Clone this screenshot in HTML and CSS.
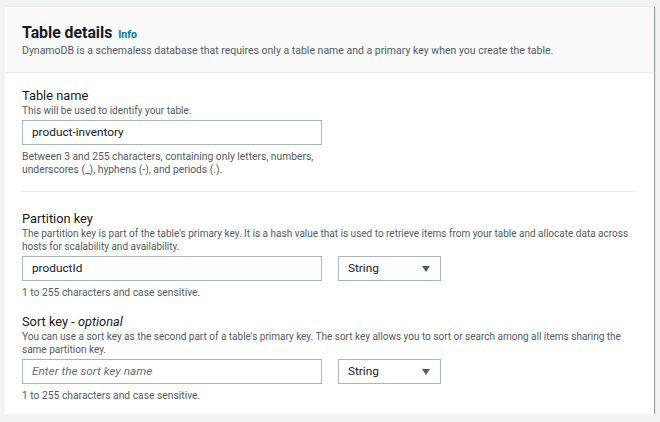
FILE: index.html
```html
<!DOCTYPE html>
<html>
<head>
<meta charset="utf-8">
<link rel="stylesheet" href="styles.css">
</head>
<body>
<div class="card">
  <div class="card-header">
    <h2 class="title">Table details <a class="info">Info</a></h2>
    <p class="subtitle">DynamoDB is a schemaless database that requires only a table name and a primary key when you create the table.</p>
  </div>
  <div class="card-body">
    <div class="field">
      <div class="label">Table name</div>
      <div class="desc">This will be used to identify your table.</div>
      <div class="row">
        <div class="input">product-inventory</div>
      </div>
      <div class="constraint">Between 3 and 255 characters, containing only letters, numbers,<br>underscores (_), hyphens (-), and periods (.).</div>
    </div>
    <div class="divider"></div>
    <div class="field">
      <div class="label">Partition key</div>
      <div class="desc">The partition key is part of the table's primary key. It is a hash value that is used to retrieve items from your table and allocate data across hosts for scalability and availability.</div>
      <div class="row">
        <div class="input">productId</div>
        <div class="select">String<svg class="caret" width="8" height="6" viewBox="0 0 8 6"><path d="M0 0h8L4 6z" fill="#545b64"/></svg></div>
      </div>
      <div class="constraint">1 to 255 characters and case sensitive.</div>
    </div>
    <div class="field">
      <div class="label">Sort key - <i>optional</i></div>
      <div class="desc">You can use a sort key as the second part of a table's primary key. The sort key allows you to sort or search among all items sharing the same partition key.</div>
      <div class="row">
        <div class="input placeholder">Enter the sort key name</div>
        <div class="select">String<svg class="caret" width="8" height="6" viewBox="0 0 8 6"><path d="M0 0h8L4 6z" fill="#545b64"/></svg></div>
      </div>
      <div class="constraint">1 to 255 characters and case sensitive.</div>
    </div>
  </div>
</div>
</body>
</html>
```
FILE: styles.css
```css
html, body {
  margin: 0;
  padding: 0;
  background: #f2f3f3;
}
body {
  padding: 6px 6px 0 5px;
  font-family: Roboto, "Noto Sans", sans-serif;
  color: #16191f;
}
.card {
  width: 649px;
  height: 408px;
  background: #fff;
  box-shadow: 1px 1px 1px 0 rgba(0, 28, 36, 0.3), 1px 1px 0 0 rgba(0,28,36,0.1);
  border-top: 1px solid #eaeded;
  box-sizing: border-box;
}
.card-header {
  background: #fafafa;
  border-bottom: 1px solid #eaeded;
  padding: 17px 17px 0 17px;
  height: 66px;
  box-sizing: border-box;
}
.title {
  margin: 0;
  font-size: 15.8px;
  font-weight: 700;
  line-height: 18px;
}
.info {
  font-size: 10.5px;
  font-weight: 700;
  color: #0073bb;
  margin-left: 2px;
}
.subtitle {
  margin: 0;
  font-size: 10.5px;
  line-height: 13px;
  color: #545b64;
}
.card-body {
  padding: 15px 17px 0 17px;
}
.label {
  font-size: 12.8px;
  line-height: 16px;
}
.label i {
  font-style: italic;
}
.desc {
  font-size: 10px;
  line-height: 13px;
  color: #545b64;
}
.row {
  display: flex;
  gap: 16px;
  margin-top: 3px;
}
.input, .select {
  height: 25px;
  border: 1px solid #aab7b8;
  box-sizing: border-box;
  font-size: 11.8px;
  line-height: 23px;
  padding: 0 9px;
  color: #16191f;
}
.input {
  width: 300px;
}
.placeholder {
  font-style: italic;
  color: #687078;
}
.select {
  width: 103px;
  display: flex;
  align-items: center;
  justify-content: space-between;
  padding-right: 10px;
}
.constraint {
  font-size: 10.3px;
  line-height: 13px;
  color: #545b64;
  margin-top: 5px;
}
.divider {
  height: 1px;
  background: #eaeded;
  margin: 15px 0 19px;
}
.field + .field {
  margin-top: 15px;
}
```
